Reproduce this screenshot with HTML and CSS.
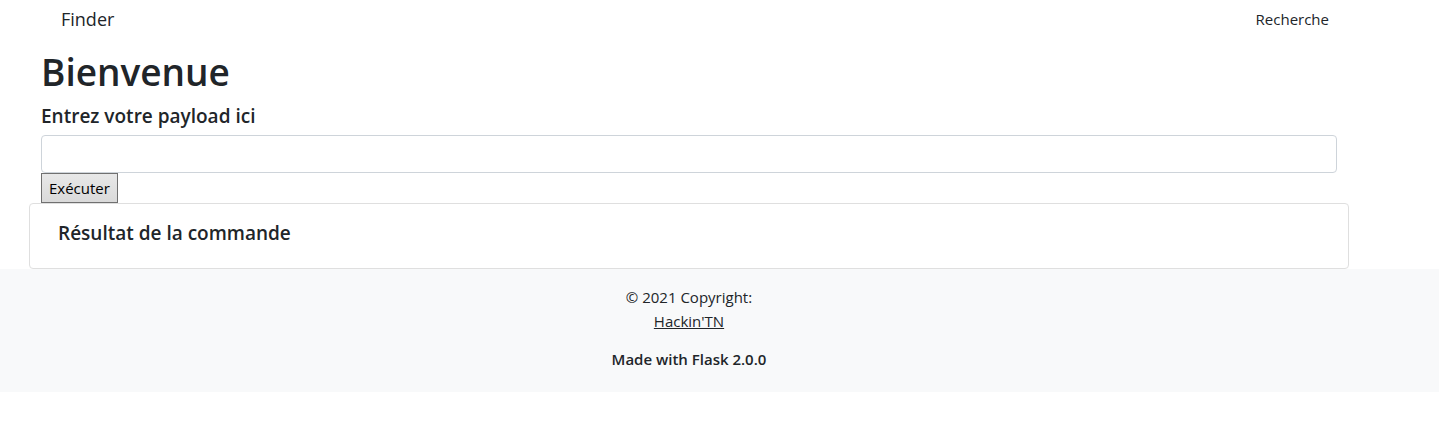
FILE: index.html
```html
<!DOCTYPE html>
<html lang="fr">
<head>
<meta charset="utf-8">
<title>Finder</title>
<link rel="stylesheet" href="styles.css">
</head>
<body>
<div class="page">
  <header class="navbar">
    <a class="brand" href="#">Finder</a>
    <nav><a class="nav-link" href="#">Recherche</a></nav>
  </header>
  <main>
    <form class="payload">
      <h1 class="title">Bienvenue</h1>
      <label class="heading" for="payload">Entrez votre payload ici</label>
      <input class="field" id="payload" type="text">
      <button class="submit" type="button">Exécuter</button>
    </form>
    <section class="card">
      <h2 class="heading">Résultat de la commande</h2>
    </section>
  </main>
</div>
<footer class="footer">
  <div class="footer-content">
    <p class="copyright">© 2021 Copyright:<br><a class="footer-link" href="#">Hackin'TN</a></p>
    <p class="made">Made with Flask 2.0.0</p>
  </div>
</footer>
</body>
</html>
```
FILE: styles.css
```css
* { box-sizing: border-box; }
body {
  margin: 0;
  background: #fff;
  color: #212529;
  font: 15px/24px "Open Sans", "Noto Sans", sans-serif;
}
h1, h2, p { margin: 0; }
.page { margin: 0 90px 0 29px; }
.navbar {
  display: flex;
  align-items: center;
  justify-content: space-between;
  height: 38px;
  padding: 0 20px 0 32px;
}
.brand { color: #212529; font-size: 18px; text-decoration: none; }
.nav-link { color: #212529; text-decoration: none; }
.payload {
  display: flex;
  flex-direction: column;
  align-items: flex-start;
  padding: 10px 12px 0;
}
.title {
  margin-bottom: 8px;
  font-size: 37px;
  font-weight: 600;
  line-height: 48px;
}
.heading { font-size: 19px; font-weight: 600; line-height: 24px; }
.field {
  width: 100%;
  height: 38px;
  margin-top: 7px;
  padding: 6px 12px;
  border: 1px solid #ced4da;
  border-radius: 4px;
  background: #fff;
  font: inherit;
}
.submit {
  height: 30px;
  padding: 0 7px;
  border: 1px solid #707070;
  border-radius: 0;
  background: linear-gradient(#e8e8e8, #dadada);
  color: #000;
  font: inherit;
}
.card {
  padding: 17px 28px 23px;
  border: 1px solid #dfdfdf;
  border-radius: 4px;
}
.footer { background: #f8f9fa; }
.footer-content {
  margin: 0 90px 0 29px;
  padding: 16px 0 21px;
  text-align: center;
}
.copyright { margin-bottom: 14px; }
.footer-link { color: #212529; }
.made { font-weight: 600; }
```
